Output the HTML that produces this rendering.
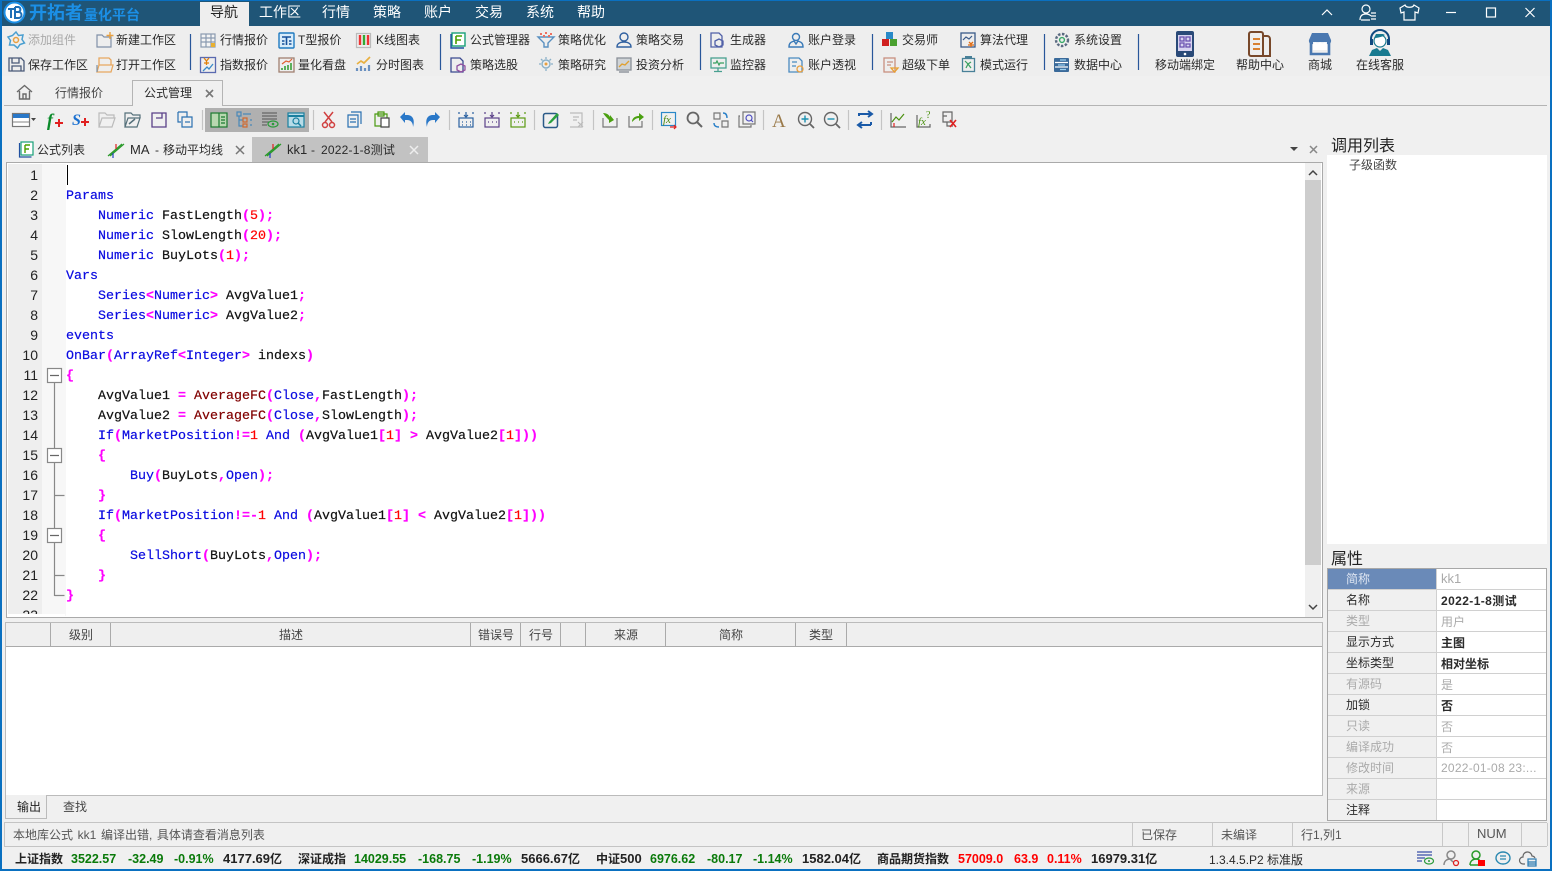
<!DOCTYPE html>
<html lang="zh"><head><meta charset="utf-8"><title>开拓者量化平台</title>
<style>
html,body{margin:0;padding:0;width:1552px;height:871px;overflow:hidden;background:#f0f0f0}
body{position:relative;font:12px/16px "Liberation Sans","Noto Sans CJK SC",sans-serif;color:#2a2a2a}
.a{position:absolute}
.t{position:absolute;white-space:nowrap;line-height:16px;height:16px}
.n{color:#aaa}
.m{color:#fff;font-size:14px;line-height:18px;height:18px}
.c{transform:translateX(-50%)}
.code{position:absolute;left:66px;top:167px;font:13.33px/20px "Liberation Mono",monospace;color:#111;white-space:pre;-webkit-text-stroke:.2px currentColor}
.b{color:#0a0ae0}.p{color:#f0f;font-weight:bold}.r{color:#f00}.w{color:#800000}
.ln{position:absolute;left:8px;width:30px;text-align:right;font:14px/20px "Liberation Sans",sans-serif;color:#222}
.col{position:absolute;top:623px;height:23px;width:1px;background:#aaa}
.k{position:absolute;left:1328px;width:108px;height:20px;background:#f0f0f0;border-bottom:1px solid #d0d0d0;border-right:1px solid #d0d0d0}
.v{position:absolute;left:1437px;width:109px;height:20px;background:#fff;border-bottom:1px solid #d0d0d0}
.l{left:1346px}.u{left:1441px}
.tick{font-weight:bold;color:#222;top:851px}
.tick b{font-size:13px}
.g{color:#0a7a0a;font-weight:bold;font-size:12.5px;top:851px}
.rd{color:#f00;font-weight:bold;font-size:12.5px;top:851px}
</style></head><body>

<div class="a" style="left:0;top:0;width:1552px;height:1px;background:#0a70c0"></div>
<div class="a" style="left:0;top:1px;width:1552px;height:25px;background:#1f5577"></div>
<div class="a" style="left:200px;top:2px;width:49px;height:24px;background:#eee"></div>
<div class="a" style="left:0;top:26px;width:1552px;height:50px;background:#eee"></div>

<div class="t" style="left:29px;top:2px;font-size:18px;font-weight:700;line-height:22px;height:22px;color:#1b8fe6">开拓者</div>
<div class="t" style="left:84px;top:6px;font-size:14px;font-weight:700;line-height:18px;height:18px;color:#1b8fe6">量化平台</div>
<div class="t m" style="left:210px;top:3px;color:#222">导航</div>
<div class="t m" style="left:259px;top:3px">工作区</div>
<div class="t m" style="left:322px;top:3px">行情</div>
<div class="t m" style="left:373px;top:3px">策略</div>
<div class="t m" style="left:424px;top:3px">账户</div>
<div class="t m" style="left:475px;top:3px">交易</div>
<div class="t m" style="left:526px;top:3px">系统</div>
<div class="t m" style="left:577px;top:3px">帮助</div>

<!-- ribbon text -->
<div class="t" style="left:28px;top:32px;color:#aaa">添加组件</div>
<div class="t" style="left:116px;top:32px">新建工作区</div>
<div class="t" style="left:220px;top:32px">行情报价</div>
<div class="t" style="left:298px;top:32px">T型报价</div>
<div class="t" style="left:376px;top:32px">K线图表</div>
<div class="t" style="left:470px;top:32px">公式管理器</div>
<div class="t" style="left:558px;top:32px">策略优化</div>
<div class="t" style="left:636px;top:32px">策略交易</div>
<div class="t" style="left:730px;top:32px">生成器</div>
<div class="t" style="left:808px;top:32px">账户登录</div>
<div class="t" style="left:902px;top:32px">交易师</div>
<div class="t" style="left:980px;top:32px">算法代理</div>
<div class="t" style="left:1074px;top:32px">系统设置</div>
<div class="t" style="left:28px;top:57px">保存工作区</div>
<div class="t" style="left:116px;top:57px">打开工作区</div>
<div class="t" style="left:220px;top:57px">指数报价</div>
<div class="t" style="left:298px;top:57px">量化看盘</div>
<div class="t" style="left:376px;top:57px">分时图表</div>
<div class="t" style="left:470px;top:57px">策略选股</div>
<div class="t" style="left:558px;top:57px">策略研究</div>
<div class="t" style="left:636px;top:57px">投资分析</div>
<div class="t" style="left:730px;top:57px">监控器</div>
<div class="t" style="left:808px;top:57px">账户透视</div>
<div class="t" style="left:902px;top:57px">超级下单</div>
<div class="t" style="left:980px;top:57px">模式运行</div>
<div class="t" style="left:1074px;top:57px">数据中心</div>
<div class="t c" style="left:1185px;top:57px">移动端绑定</div>
<div class="t c" style="left:1260px;top:57px">帮助中心</div>
<div class="t c" style="left:1320px;top:57px">商城</div>
<div class="t c" style="left:1380px;top:57px">在线客服</div>

<!-- workspace tabs -->
<div class="a" style="left:4px;top:105px;width:1543px;height:1px;background:#b4b4b4"></div>
<div class="a" style="left:132px;top:80px;width:89px;height:25px;background:#f0f0f0;border:1px solid #b4b4b4;border-bottom:none;z-index:1"></div>
<div class="t" style="left:55px;top:85px;color:#444">行情报价</div>
<div class="t" style="left:144px;top:85px;z-index:2">公式管理</div>

<!-- toolbar group -->
<div class="a" style="left:205px;top:108px;width:104px;height:24px;background:#b0b0b0"></div>

<!-- formula tabs -->
<div class="a" style="left:252px;top:137px;width:176px;height:25px;background:#c2c2c2"></div>
<div class="t" style="left:37px;top:142px">公式列表</div>
<div class="t" style="left:130px;top:142px;font-size:13px">MA</div><div class="t" style="left:155px;top:142px">-</div><div class="t" style="left:163px;top:142px">移动平均线</div>
<div class="t" style="left:287px;top:142px;font-size:13px">kk1</div><div class="t" style="left:311px;top:142px">-</div><div class="t" style="left:321px;top:142px;letter-spacing:.2px">2022-1-8测试</div>

<!-- editor -->
<div class="a" style="left:6px;top:162px;width:1315px;height:454px;background:#fff;border:1px solid #aaa;overflow:hidden">
  <div class="a" style="left:1px;top:1px;width:34px;height:452px;background:#eee"></div>
  <div class="a" style="left:35px;top:1px;width:24px;height:452px;background:#f7f7f7"></div>
  <div class="a" style="left:1298px;top:0;width:16px;height:454px;background:#f0f0f0"></div>
  <div class="a" style="left:1298px;top:17px;width:16px;height:385px;background:#cdcdcd"></div>
</div>
<div class="a" style="left:7px;top:614px;width:58px;height:2px;background:#fff"></div>
<div class="a" style="left:8px;top:165px;width:58px;height:449px;overflow:hidden;z-index:1">
<div class="ln" style="left:0;top:0">1</div><div class="ln" style="left:0;top:20px">2</div><div class="ln" style="left:0;top:40px">3</div><div class="ln" style="left:0;top:60px">4</div><div class="ln" style="left:0;top:80px">5</div><div class="ln" style="left:0;top:100px">6</div><div class="ln" style="left:0;top:120px">7</div><div class="ln" style="left:0;top:140px">8</div><div class="ln" style="left:0;top:160px">9</div><div class="ln" style="left:0;top:180px">10</div><div class="ln" style="left:0;top:200px">11</div><div class="ln" style="left:0;top:220px">12</div><div class="ln" style="left:0;top:240px">13</div><div class="ln" style="left:0;top:260px">14</div><div class="ln" style="left:0;top:280px">15</div><div class="ln" style="left:0;top:300px">16</div><div class="ln" style="left:0;top:320px">17</div><div class="ln" style="left:0;top:340px">18</div><div class="ln" style="left:0;top:360px">19</div><div class="ln" style="left:0;top:380px">20</div><div class="ln" style="left:0;top:400px">21</div><div class="ln" style="left:0;top:420px">22</div><div class="ln" style="left:0;top:440px">23</div>
</div>
<div class="code">
<span class="b">Params</span>
    <span class="b">Numeric</span> FastLength<span class="p">(</span><span class="r">5</span><span class="p">);</span>
    <span class="b">Numeric</span> SlowLength<span class="p">(</span><span class="r">20</span><span class="p">);</span>
    <span class="b">Numeric</span> BuyLots<span class="p">(</span><span class="r">1</span><span class="p">);</span>
<span class="b">Vars</span>
    <span class="b">Series</span><span class="p">&lt;</span><span class="b">Numeric</span><span class="p">&gt;</span> AvgValue1<span class="p">;</span>
    <span class="b">Series</span><span class="p">&lt;</span><span class="b">Numeric</span><span class="p">&gt;</span> AvgValue2<span class="p">;</span>
<span class="b">events</span>
<span class="b">OnBar</span><span class="p">(</span><span class="b">ArrayRef</span><span class="p">&lt;</span><span class="b">Integer</span><span class="p">&gt;</span> indexs<span class="p">)</span>
<span class="p">{</span>
    AvgValue1 <span class="p">=</span> <span class="w">AverageFC</span><span class="p">(</span><span class="b">Close</span><span class="p">,</span>FastLength<span class="p">);</span>
    AvgValue2 <span class="p">=</span> <span class="w">AverageFC</span><span class="p">(</span><span class="b">Close</span><span class="p">,</span>SlowLength<span class="p">);</span>
    <span class="b">If</span><span class="p">(</span><span class="b">MarketPosition</span><span class="p">!=</span><span class="r">1</span> <span class="b">And</span> <span class="p">(</span>AvgValue1<span class="p">[</span><span class="r">1</span><span class="p">]</span> <span class="p">&gt;</span> AvgValue2<span class="p">[</span><span class="r">1</span><span class="p">]))</span>
    <span class="p">{</span>
        <span class="b">Buy</span><span class="p">(</span>BuyLots<span class="p">,</span><span class="b">Open</span><span class="p">);</span>
    <span class="p">}</span>
    <span class="b">If</span><span class="p">(</span><span class="b">MarketPosition</span><span class="p">!=-</span><span class="r">1</span> <span class="b">And</span> <span class="p">(</span>AvgValue1<span class="p">[</span><span class="r">1</span><span class="p">]</span> <span class="p">&lt;</span> AvgValue2<span class="p">[</span><span class="r">1</span><span class="p">]))</span>
    <span class="p">{</span>
        <span class="b">SellShort</span><span class="p">(</span>BuyLots<span class="p">,</span><span class="b">Open</span><span class="p">);</span>
    <span class="p">}</span>
<span class="p">}</span></div>
<div class="a" style="left:67px;top:165px;width:1px;height:20px;background:#000"></div>

<!-- output panel -->
<div class="a" style="left:5px;top:622px;width:1316px;height:172px;background:#fff;border:1px solid #bbb"></div>
<div class="a" style="left:6px;top:623px;width:1316px;height:23px;background:#efefef;border-bottom:1px solid #aaa"></div>
<div class="col" style="left:50px"></div><div class="col" style="left:110px"></div><div class="col" style="left:470px"></div><div class="col" style="left:520px"></div><div class="col" style="left:560px"></div><div class="col" style="left:585px"></div><div class="col" style="left:665px"></div><div class="col" style="left:795px"></div><div class="col" style="left:846px"></div>
<div class="t c" style="left:81px;top:627px;color:#444">级别</div>
<div class="t c" style="left:291px;top:627px;color:#444">描述</div>
<div class="t c" style="left:496px;top:627px;color:#444">错误号</div>
<div class="t c" style="left:541px;top:627px;color:#444">行号</div>
<div class="t c" style="left:626px;top:627px;color:#444">来源</div>
<div class="t c" style="left:731px;top:627px;color:#444">简称</div>
<div class="t c" style="left:821px;top:627px;color:#444">类型</div>
<div class="a" style="left:5px;top:795px;width:40px;height:23px;background:#f0f0f0;border:1px solid #bbb;border-top:none"></div>
<div class="t" style="left:17px;top:799px;color:#222">输出</div>
<div class="t" style="left:63px;top:799px;color:#444">查找</div>

<!-- right panels -->
<div class="t" style="left:1331px;top:138px;font-size:16px;line-height:18px;height:18px;color:#222;z-index:1">调用列表</div>
<div class="a" style="left:1327px;top:155px;width:220px;height:389px;background:#fff"></div>
<div class="t" style="left:1349px;top:157px;color:#444">子级函数</div>
<div class="t" style="left:1331px;top:551px;font-size:16px;line-height:18px;height:18px;color:#222">属性</div>
<div class="a" style="left:1327px;top:568px;width:220px;height:253px;border:1px solid #a8a8a8;box-sizing:border-box;background:#fff"></div>

<div class="k" style="top:569px;background:#6a8ab8"></div><div class="v" style="top:569px"></div>
<div class="k" style="top:590px"></div><div class="v" style="top:590px"></div>
<div class="k" style="top:611px"></div><div class="v" style="top:611px"></div>
<div class="k" style="top:632px"></div><div class="v" style="top:632px"></div>
<div class="k" style="top:653px"></div><div class="v" style="top:653px"></div>
<div class="k" style="top:674px"></div><div class="v" style="top:674px"></div>
<div class="k" style="top:695px"></div><div class="v" style="top:695px"></div>
<div class="k" style="top:716px"></div><div class="v" style="top:716px"></div>
<div class="k" style="top:737px"></div><div class="v" style="top:737px"></div>
<div class="k" style="top:758px"></div><div class="v" style="top:758px"></div>
<div class="k" style="top:779px"></div><div class="v" style="top:779px"></div>
<div class="k" style="top:800px;height:20px;border-bottom:none"></div><div class="v" style="top:800px;height:20px;border-bottom:none"></div>

<div class="t l" style="top:571px;color:#dfe6f2">简称</div><div class="t u n" style="top:571px;font-size:13px">kk1</div>
<div class="t l" style="top:592px">名称</div><div class="t u" style="top:593px;font-weight:700;letter-spacing:.4px">2022-1-8测试</div>
<div class="t l n" style="top:613px">类型</div><div class="t u n" style="top:614px">用户</div>
<div class="t l" style="top:634px">显示方式</div><div class="t u" style="top:635px;font-weight:700">主图</div>
<div class="t l" style="top:655px">坐标类型</div><div class="t u" style="top:656px;font-weight:700">相对坐标</div>
<div class="t l n" style="top:676px">有源码</div><div class="t u n" style="top:677px">是</div>
<div class="t l" style="top:697px">加锁</div><div class="t u" style="top:698px;font-weight:700">否</div>
<div class="t l n" style="top:718px">只读</div><div class="t u n" style="top:719px">否</div>
<div class="t l n" style="top:739px">编译成功</div><div class="t u n" style="top:740px">否</div>
<div class="t l n" style="top:760px">修改时间</div><div class="t u n" style="top:760px;letter-spacing:.25px">2022-01-08 23:...</div>
<div class="t l n" style="top:781px">来源</div>
<div class="t l" style="top:802px">注释</div>

<!-- status bar -->
<div class="a" style="left:4px;top:822px;width:1543px;height:1px;background:#c4c4c4"></div>
<div class="a" style="left:4px;top:846px;width:1543px;height:1px;background:#c4c4c4"></div>
<div class="a" style="left:4px;top:823px;width:1px;height:23px;background:#c4c4c4"></div>
<div class="a" style="left:1132px;top:823px;width:1px;height:23px;background:#c8c8c8"></div>
<div class="a" style="left:1212px;top:823px;width:1px;height:23px;background:#c8c8c8"></div>
<div class="a" style="left:1292px;top:823px;width:1px;height:23px;background:#c8c8c8"></div>
<div class="a" style="left:1442px;top:823px;width:1px;height:23px;background:#c8c8c8"></div>
<div class="a" style="left:1468px;top:823px;width:1px;height:23px;background:#c8c8c8"></div>
<div class="a" style="left:1521px;top:823px;width:1px;height:23px;background:#c8c8c8"></div>
<div class="a" style="left:1547px;top:823px;width:1px;height:23px;background:#c8c8c8"></div>
<div class="t" style="left:13px;top:827px;color:#555;word-spacing:1.3px">本地库公式 kk1 编译出错, 具体请查看消息列表</div>
<div class="t" style="left:1141px;top:827px;color:#555">已保存</div>
<div class="t" style="left:1221px;top:827px;color:#555">未编译</div>
<div class="t" style="left:1301px;top:827px;color:#555">行1,列1</div>
<div class="t" style="left:1477px;top:826px;color:#555;font-size:13px">NUM</div>

<!-- ticker -->
<div class="t tick" style="left:15px">上证指数</div><div class="t g" style="left:71px">3522.57</div><div class="t g" style="left:128px">-32.49</div><div class="t g" style="left:174px">-0.91%</div><div class="t tick" style="left:223px"><b>4177.69</b>亿</div>
<div class="t tick" style="left:298px">深证成指</div><div class="t g" style="left:354px">14029.55</div><div class="t g" style="left:418px">-168.75</div><div class="t g" style="left:472px">-1.19%</div><div class="t tick" style="left:521px"><b>5666.67</b>亿</div>
<div class="t tick" style="left:596px">中证<b>500</b></div><div class="t g" style="left:650px">6976.62</div><div class="t g" style="left:707px">-80.17</div><div class="t g" style="left:753px">-1.14%</div><div class="t tick" style="left:802px"><b>1582.04</b>亿</div>
<div class="t tick" style="left:877px">商品期货指数</div><div class="t rd" style="left:958px">57009.0</div><div class="t rd" style="left:1014px">63.9</div><div class="t rd" style="left:1047px">0.11%</div><div class="t tick" style="left:1091px"><b>16979.31</b>亿</div>
<div class="t" style="left:1209px;top:852px">1.3.4.5.P2 标准版</div>

<!-- window edges -->
<div class="a" style="left:0;top:1px;width:2px;height:870px;background:#0a70c0"></div>
<div class="a" style="left:1550px;top:1px;width:2px;height:870px;background:#0a70c0"></div>
<div class="a" style="left:0;top:869px;width:1552px;height:2px;background:#0a70c0"></div>

<!-- icon layer -->
<svg class="a" style="left:0;top:0;z-index:3;pointer-events:none" width="1552" height="871" viewBox="0 0 1552 871" fill="none" stroke-width="1.2">
<!-- logo -->
<circle cx="14.500" cy="12.500" r="10" fill="#fff"/><circle cx="14.500" cy="12.500" r="10" stroke="#1b8fe6" stroke-width="2"/>
<path d="M8 9h7M11 9v9M15 7v11h3.500a3 3 0 0 0 0-6h-3m3 0a2.600 2.600 0 0 0 0-5H15" stroke="#1f6fb5" stroke-width="2"/>
<!-- window controls -->
<path d="M1322 15l5-5 5 5" stroke="#fff"/>
<circle cx="1366" cy="9" r="4" stroke="#fff"/><path d="M1360 20c0-5 3-6 6-6s4 1 5 2M1361 20h9M1371 13h5M1371 16h5M1371 19h5" stroke="#fff"/>
<path d="M1405 5l-5 3 1 5 3-1v8h11v-8l3 1 1-5-5-3c-1 3-8 3-9 0z" stroke="#fff"/>
<path d="M1446 12.500h10" stroke="#fff"/><rect x="1486.500" y="8" width="9" height="9" stroke="#fff"/><path d="M1525.500 8l9 9M1534.500 8l-9 9" stroke="#fff"/>
<!-- ribbon separators -->
<g stroke="#28569a"><path d="M190.500 34v36M440.500 34v36M700.500 34v36M872.500 34v36M1044.500 34v36M1138.500 34v36"/></g>
<!-- row 1 icons -->
<path d="M16 32l2.500 3.500 4.500-.5-1 4.500 2.500 3.500-4.500 1.500-2.500 3.500-3.500-3-4.500 0 1-4.500-2.500-3.500 4.500-1.500z" stroke="#4a9fd0" stroke-width="1.500"/><circle cx="16" cy="40" r="2.500" stroke="#e8a040" stroke-width="1.500"/>
<path d="M97 47V35h5l2 2h7v10z" stroke="#8090a8"/><path d="M110 32v7M106.500 35.500h7" stroke="#e8a040" stroke-width="1.400"/>
<rect x="201" y="34" width="14" height="13" stroke="#8a9ab0" fill="#f4f4f4"/><path d="M201 38h14M201 42h14M206 34v13M211 34v13" stroke="#8a9ab0"/><rect x="211" y="43" width="4" height="4" fill="#e8b030"/>
<rect x="279" y="33" width="15" height="15" rx="1" stroke="#1f7ac0" stroke-width="1.400" fill="#d8ecfa"/><path d="M282 37h9M286.500 37v8M282 41h2.500M282 44h2.500M289 41h2.500M289 44h2.500" stroke="#16509a" stroke-width="1.600"/>
<rect x="356.500" y="33.500" width="14" height="14" stroke="#bbb"/><path d="M360 35v10" stroke="#e33" stroke-width="2.400"/><path d="M364 35v10" stroke="#3a3" stroke-width="2.400"/><path d="M368 35v10" stroke="#e33" stroke-width="2.400"/>
<rect x="452" y="33" width="13" height="13" stroke="#18a078" stroke-width="1.400" fill="#fff"/><path d="M456 36v8M456 36h6M456 40h5" stroke="#4aa000" stroke-width="1.600"/><path d="M451 34v14h13" stroke="#2050a0" stroke-width="1.400"/>
<path d="M538 37h16l-6 6v4h-4v-4z" stroke="#5a90c0" stroke-width="1.400"/><path d="M540 34h2M545 33h2M550 34h2M543 36h2M548 36h2" stroke="#ee7060" stroke-width="2"/>
<circle cx="624" cy="37" r="4" stroke="#3060a0" stroke-width="1.400"/><path d="M617 47c0-4 4-5 7-5s7 1 7 5z" stroke="#3060a0" stroke-width="1.400"/>
<path d="M711 33h8l3 3v11h-11zM715 41l4-2 4 2v4l-4 2-4-2z" stroke="#5060a8" stroke-width="1.300"/>
<circle cx="796" cy="37" r="3.500" stroke="#3a7ab8" stroke-width="1.400"/><path d="M789 47c0-5 3-5 5-6l2 3 2-3c2 1 5 1 5 6z" stroke="#3a7ab8" stroke-width="1.400"/>
<rect x="886" y="32" width="7" height="7" fill="#2a8ac8"/><rect x="882" y="39" width="7" height="7" fill="#d02020"/><rect x="890" y="39" width="7" height="7" fill="#4aa030"/>
<rect x="961" y="33" width="14" height="14" stroke="#3a5a88" stroke-width="1.300"/><path d="M963 40l3-3 3 2 3-3" stroke="#3a5a88"/><path d="M969 42l2 2 2-2M971 44v3M968 45h6" stroke="#e06a10" stroke-width="1.300"/>
<circle cx="1062" cy="40" r="6" stroke="#5a6a80" stroke-width="2.400" stroke-dasharray="2.500 1.500"/><circle cx="1062" cy="40" r="2.400" stroke="#38a868" stroke-width="1.400"/>
<!-- row 2 icons -->
<path d="M9 71V58h12l3 3v10zM12 58v5h7v-5M12 71v-5h9v5" stroke="#4a5a78" stroke-width="1.300"/>
<path d="M97 72l2-7h14l-2 7zM99 65v-7h10l2 2v5" stroke="#e8a860" stroke-width="1.300"/><path d="M97 65v7" stroke="#7a90a8"/>
<rect x="200.500" y="57.500" width="15" height="15" stroke="#5a6ab0" stroke-width="1.300"/><path d="M204 58l2.500 3 2.500-3M206.500 61v4M204 63h5" stroke="#e0800a" stroke-width="1.300"/><path d="M203 71l4-4 2 2 4-5" stroke="#3a8ac8" stroke-width="1.300"/>
<rect x="279" y="58" width="15" height="14" stroke="#a08070" stroke-width="1.300"/><path d="M282 70v-2M285 70v-4M288 70v-5M291 70v-7" stroke="#38a038" stroke-width="1.600"/><path d="M282 64l4-3 3 1 3-3" stroke="#e06030"/>
<path d="M357 71v-3M361 71v-5M365 71v-3M369 71v-6" stroke="#6a90c0" stroke-width="2.200"/><path d="M357 64l4-3 3 2 6-6" stroke="#e8b040" stroke-width="1.700"/>
<path d="M451 58h9l3 3v11h-12z" stroke="#3a4a90" stroke-width="1.300"/><path d="M457 66l4-2 4 2v4l-4 2-4-2z" stroke="#9050a0" stroke-width="1.300"/>
<circle cx="546" cy="64" r="4" stroke="#8ab0c8" stroke-width="1.400"/><path d="M546 57v2M546 69v2M539 64h2M551 64h2M541 59l1.500 1.500M551 59l-1.500 1.500" stroke="#8ab0c8" stroke-width="1.300"/><circle cx="546" cy="64" r="1.500" fill="#e8a040"/>
<rect x="617" y="58" width="14" height="12" stroke="#8a9098" stroke-width="1.300" fill="#d0d4d8"/><path d="M619 67l3-3 3 1 4-4" stroke="#e0a030" stroke-width="1.300"/><path d="M619 72h10" stroke="#8a9098" stroke-width="1.400"/>
<rect x="711" y="58" width="15" height="10" stroke="#48a090" stroke-width="1.300"/><path d="M713 63h3l1-2 2 4 1-2h4" stroke="#38a060"/><path d="M718 68v3M714 71.500h8" stroke="#48a090" stroke-width="1.300"/>
<path d="M789 58h10l3 3v11h-13z" stroke="#4a8ac0" stroke-width="1.300"/><path d="M792 62h5M792 66h4" stroke="#4a8ac0"/><circle cx="800" cy="69" r="3" stroke="#e8a040" stroke-width="1.300"/>
<rect x="884" y="58" width="11" height="14" stroke="#c89080" stroke-width="1.300"/><path d="M887 62h6M887 65h4" stroke="#c89080"/><path d="M891 68h7l-3.500 4z" stroke="#e8a030" stroke-width="1.300"/>
<rect x="962.500" y="58.500" width="12" height="13" stroke="#488098" stroke-width="1.300"/><path d="M965 61l3 3-2 4M971 62l-3 2 3 4" stroke="#38a060"/><path d="M965 57h7" stroke="#488098" stroke-width="2"/>
<rect x="1054" y="58" width="15" height="14" rx="1" fill="#3a6a9a"/><path d="M1055 62.500h13M1055 67h13" stroke="#fff"/><path d="M1060 60h6M1058 65h7M1060 69.500h6" stroke="#9ad0f0"/>
<!-- big icons -->
<rect x="1176" y="31" width="18" height="26" rx="2" fill="#2a4a78"/><rect x="1178" y="35" width="14" height="16" fill="#d8d4f0"/><path d="M1180 37h4v4h-4zM1186 37h4v4h-4zM1180 43h4v4h-4zM1186 44h4v3h-4z" stroke="#6a50b0" stroke-width="1.300"/><circle cx="1185" cy="54" r="1.300" fill="#fff"/>
<path d="M1249 34a2 2 0 0 1 2-2h10a2 2 0 0 1 2 2v22h-12a2 2 0 0 1-2-2zM1263 36h4a3 3 0 0 1 3 3v17h-7" stroke="#78482a" stroke-width="2"/><path d="M1253 39h7M1253 44h7M1253 49h7" stroke="#d88030" stroke-width="2"/>
<path d="M1312 33h16l3 7a3 3 0 0 1-6 2 3 3 0 0 1-5 0 3 3 0 0 1-5 0 3 3 0 0 1-6-2z" fill="#4a78b0"/><path d="M1311 43v11h18V43" stroke="#4a78b0" stroke-width="2.600"/><rect x="1313" y="42" width="14" height="8" fill="#fff" opacity=".9"/>
<circle cx="1380" cy="41" r="6" fill="#fff" stroke="#1a7a90"/><path d="M1371 43v-4a9 9 0 0 1 18 0v4" stroke="#104a80" stroke-width="2"/><rect x="1370" y="39" width="3" height="6" fill="#104a80"/><rect x="1387" y="39" width="3" height="6" fill="#104a80"/><path d="M1374 38c3 0 8-1 11-3l-2-1h-7z" fill="#1a7a90"/><path d="M1369 56l3-6 5-2 3 3 3-3 5 2 3 6z" fill="#187a90"/>
<!-- home, tab close -->
<path d="M17 92l7.500-6.500L32 92M19.500 91v8h10v-8M23 99v-5h3v5" stroke="#6a6a6a" stroke-width="1.400"/>
<path d="M206 90l7 7M213 90l-7 7" stroke="#777" stroke-width="1.600"/>
<!-- toolbar -->
<rect x="12.500" y="113.500" width="17" height="13" stroke="#777" fill="#fff"/><path d="M13 114h16v4H13z" fill="#2a78c8"/><path d="M13 122h16" stroke="#999"/><path d="M31 118h5l-2.500 3z" fill="#444"/>
<text x="47" y="126" font-family="Liberation Serif" font-style="italic" font-weight="bold" font-size="18" fill="#0a8a2a">f</text><path d="M55 123h8M59 119v8" stroke="#e02020" stroke-width="2"/>
<text x="72" y="125" font-family="Liberation Serif" font-style="italic" font-weight="bold" font-size="16" fill="#1a70d0">S</text><path d="M81 122h8M85 118v8" stroke="#e02020" stroke-width="2"/>
<path d="M99 127v-14h6l2 2h7v3M99 127l3-9h13l-3 9z" stroke="#bbb"/>
<path d="M125 127v-14h6l2 2h7v3M125 127l3-9h12l-3 9z" stroke="#55707a"/><path d="M129 124l6-5" stroke="#55707a" stroke-width="1.500"/>
<path d="M152 113h14v14h-14zM162 113v5h-6" stroke="#5a4088" stroke-width="1.300"/>
<path d="M178 112h9v5M178 112v10h3M182 117h10v10h-10z" stroke="#2a70b0"/><path d="M185 122h5" stroke="#2a70b0"/>
<rect x="211" y="113" width="16" height="14" stroke="#1a7a30" fill="#b8d8b0"/><path d="M219 113v14M221 117h4M221 120h4M221 123h4" stroke="#1a7a30"/>
<path d="M237 112h4v4h-4zM239 116v10h4M239 120h4M243 114h8M250 120h2M250 125h2" stroke="#4a88b8"/><path d="M243 118h4v4h-4zM243 124h4v3h-4z" stroke="#d06a30"/>
<path d="M262 113h15M262 116h15M262 119h15M262 122h7M262 125h5" stroke="#666"/><ellipse cx="273" cy="124" rx="5" ry="3" stroke="#2a9a3a"/><circle cx="273" cy="124" r="1.300" fill="#2a9a3a"/>
<rect x="288" y="113" width="16" height="14" stroke="#1a80a0" fill="#b8dce8"/><path d="M288 116h16" stroke="#1a80a0" stroke-width="2"/><circle cx="296" cy="121" r="3" stroke="#1a80a0"/><path d="M298 123l3 3" stroke="#1a80a0" stroke-width="1.500"/>
<path d="M324 112l8 10M333 112l-8 10" stroke="#d04040" stroke-width="1.500"/><circle cx="325" cy="125" r="2.500" stroke="#d04040" stroke-width="1.500"/><circle cx="332" cy="125" r="2.500" stroke="#d04040" stroke-width="1.500"/>
<path d="M351 112h10v12M348 115h10v12h-10z" stroke="#2a70b0"/><path d="M350 119h6M350 122h6" stroke="#2a70b0"/>
<path d="M375 114h12v12h-12zM378 112h6v4h-6z" stroke="#4a9a10"/><path d="M381 118h8v9h-8z" stroke="#444" fill="#fff"/>
<path d="M400 117l5-5v3h2c6 0 8 5 6 12 0-4-2-7-6-7h-2v3z" fill="#2a78c8"/>
<path d="M440 117l-5-5v3h-2c-6 0-8 5-6 12 0-4 2-7 6-7h2v3z" fill="#2a78c8"/>
<rect x="459" y="118" width="14" height="9" stroke="#2a60a0"/><path d="M466 112v5M464 115l2 2 2-2M459 112v2M473 112v2M462 122h1M466 122h1M470 122h1M462 125h1M466 125h1M470 125h1" stroke="#2a60a0"/>
<rect x="485" y="118" width="14" height="9" stroke="#5a4088"/><path d="M492 112v5M490 115l2 2 2-2M485 112v2M499 112v2M488 122h1M492 122h1M496 122h1" stroke="#5a4088"/>
<rect x="511" y="118" width="14" height="9" stroke="#5a9a10"/><path d="M518 112v5M516 115l2 2 2-2M511 112v2M525 112v2M514 122h1M518 122h1M522 122h1" stroke="#5a9a10"/>
<rect x="543.500" y="113.500" width="14" height="14" rx="2" stroke="#2a5a88" stroke-width="1.500"/><path d="M549 122l8-9 2 2-8 8-3 1z" fill="#2aa040"/>
<path d="M570 113h12v14h-12M573 117h6M573 120h4M578 122l5 5M583 122l-5 5" stroke="#bbb"/>
<path d="M603 118v9h14v-9" stroke="#777"/><path d="M603 113c4 0 6 2 7 4v-2l4 5-5 3v-3c-2-2-4-4-6-7z" fill="#4aa010"/>
<path d="M629 116v11h13v-6" stroke="#777"/><path d="M632 122c0-4 3-6 7-6v-3l5 4-5 4v-3c-3 0-5 2-7 4z" fill="#4aa010"/>
<rect x="661.500" y="112.500" width="14" height="13" stroke="#2a88c8"/><text x="663" y="123" font-family="Liberation Serif" font-style="italic" font-size="11" fill="#4a8a10">fx</text><path d="M670 127h6M674 125l2 2-2 2" stroke="#e02020"/>
<circle cx="693" cy="118" r="5.500" stroke="#666" stroke-width="1.800"/><path d="M697 122l5 5" stroke="#666" stroke-width="2"/>
<path d="M714 113h6v6h-6zM722 121h6v6h-6z" stroke="#777"/><path d="M723 113c3 0 4 2 4 5M714 123c0 3 2 4 5 4" stroke="#2a80c8" stroke-width="1.400"/>
<path d="M740 116h-1v11h12v-2M743 112h12v12h-12z" stroke="#777"/><circle cx="749" cy="118" r="3" stroke="#5050c0"/><path d="M751 120l2 2" stroke="#5050c0"/>
<text x="772" y="127" font-family="Liberation Serif" font-size="19" fill="#9a7a4a">A</text>
<circle cx="805" cy="119" r="6.500" stroke="#666" stroke-width="1.400"/><path d="M810 124l4 4" stroke="#666" stroke-width="1.800"/><path d="M801.500 119h7M805 115.500v7" stroke="#1a90b0" stroke-width="1.400"/>
<circle cx="831" cy="119" r="6.500" stroke="#666" stroke-width="1.400"/><path d="M836 124l4 4" stroke="#666" stroke-width="1.800"/><path d="M827.500 119h7" stroke="#1a90b0" stroke-width="1.400"/>
<path d="M859 115v-1h12M868 111l4 3-4 3M871 125h-12M862 128l-4-3 4-3M859 116v-2M871 125v-3" stroke="#1a5aa8" stroke-width="2"/>
<path d="M891 113v14h15" stroke="#666"/><path d="M892 122l4-5 3 3 5-6" stroke="#4a9010"/><path d="M894 127v-4" stroke="#e02020"/>
<path d="M917 115v12h13v-3" stroke="#666"/><text x="918" y="125" font-family="Liberation Serif" font-style="italic" font-size="11" fill="#4a9010">fx</text><text x="926" y="118" font-family="Liberation Serif" font-size="10" fill="#4a9010">?</text>
<path d="M943 112h9v10h-9zM947 116h-4M947 122v4h6" stroke="#666"/><path d="M950 120l6 7M956 120l-6 7" stroke="#e02020" stroke-width="1.600"/>
<g stroke="#c4c4c4"><path d="M202.500 110v20M313.500 110v20M449.500 110v20M534.500 110v20M593.500 110v20M652.500 110v20M763.500 110v20M848.500 110v20M881.500 110v20"/></g>
<!-- formula tab icons -->
<rect x="21" y="142" width="12" height="13" stroke="#18a078" fill="#fff"/><path d="M25 145v8M25 145h5M25 149h4" stroke="#4aa000" stroke-width="1.400"/><path d="M19.500 143v14h12" stroke="#2050a0"/>
<path d="M108 156l14-12M110 156l14-12" stroke="#2a9a2a"/><path d="M116 144v5" stroke="#e02020"/><path d="M113 153v5" stroke="#2040c0"/>
<path d="M265 156l14-12M267 156l14-12" stroke="#2a9a2a"/><path d="M273 144v5" stroke="#e02020"/><path d="M270 153v5" stroke="#2040c0"/>
<path d="M236 146l8 8M244 146l-8 8" stroke="#777" stroke-width="1.500"/>
<path d="M410 146l8 8M418 146l-8 8" stroke="#eee" stroke-width="1.500"/>
<path d="M1290 147h8l-4 4z" fill="#444"/><path d="M1310 146l7 7M1317 146l-7 7" stroke="#888" stroke-width="1.500"/>
<!-- scrollbar arrows -->
<path d="M1309 175l4-4 4 4" stroke="#444" stroke-width="1.500"/><path d="M1309 605l4 4 4-4" stroke="#444" stroke-width="1.500"/>
<!-- folding -->
<path d="M54.500 382v214M54.500 495.500h10M54.500 575.500h10M54.500 595.500h10" stroke="#888"/>
<g fill="#fff" stroke="#888"><rect x="47.500" y="368.500" width="14" height="14"/><rect x="47.500" y="448.500" width="14" height="14"/><rect x="47.500" y="528.500" width="14" height="14"/></g>
<path d="M50 375.500h9M50 455.500h9M50 535.500h9" stroke="#666"/>
<!-- tray icons -->
<path d="M1417 852h15M1417 855h15M1417 858h8M1417 861h5" stroke="#3a50a8" stroke-width="1.300"/><ellipse cx="1429" cy="861" rx="4.500" ry="3" stroke="#2a9a3a"/><circle cx="1429" cy="861" r="1" fill="#2a9a3a"/>
<circle cx="1451" cy="855" r="4" stroke="#888" stroke-width="1.500"/><path d="M1444 865c0-4 3-6 6-6l3 3" stroke="#888" stroke-width="1.500"/><circle cx="1456" cy="863" r="2.500" stroke="#e02020" stroke-width="1.300"/>
<circle cx="1476" cy="855" r="4" stroke="#2a9a2a" stroke-width="1.500"/><path d="M1470 865c0-4 3-6 6-6s3 1 4 2M1470 865h9" stroke="#2a9a2a" stroke-width="1.500"/><rect x="1478" y="860" width="7" height="6" fill="#f00"/>
<ellipse cx="1503" cy="858" rx="7" ry="6" stroke="#2a88b0" stroke-width="1.400"/><path d="M1500 856h6M1500 859h6" stroke="#2a88b0"/>
<path d="M1525 864h-2a3.500 3.500 0 0 1 0-7 4.500 4.500 0 0 1 9-1 3.500 3.500 0 0 1 3 2" stroke="#666"/><rect x="1528" y="859" width="8" height="7" stroke="#2a7ab0"/><path d="M1528 862h8M1528 864h8" stroke="#2a7ab0"/>
</svg>
</body></html>
